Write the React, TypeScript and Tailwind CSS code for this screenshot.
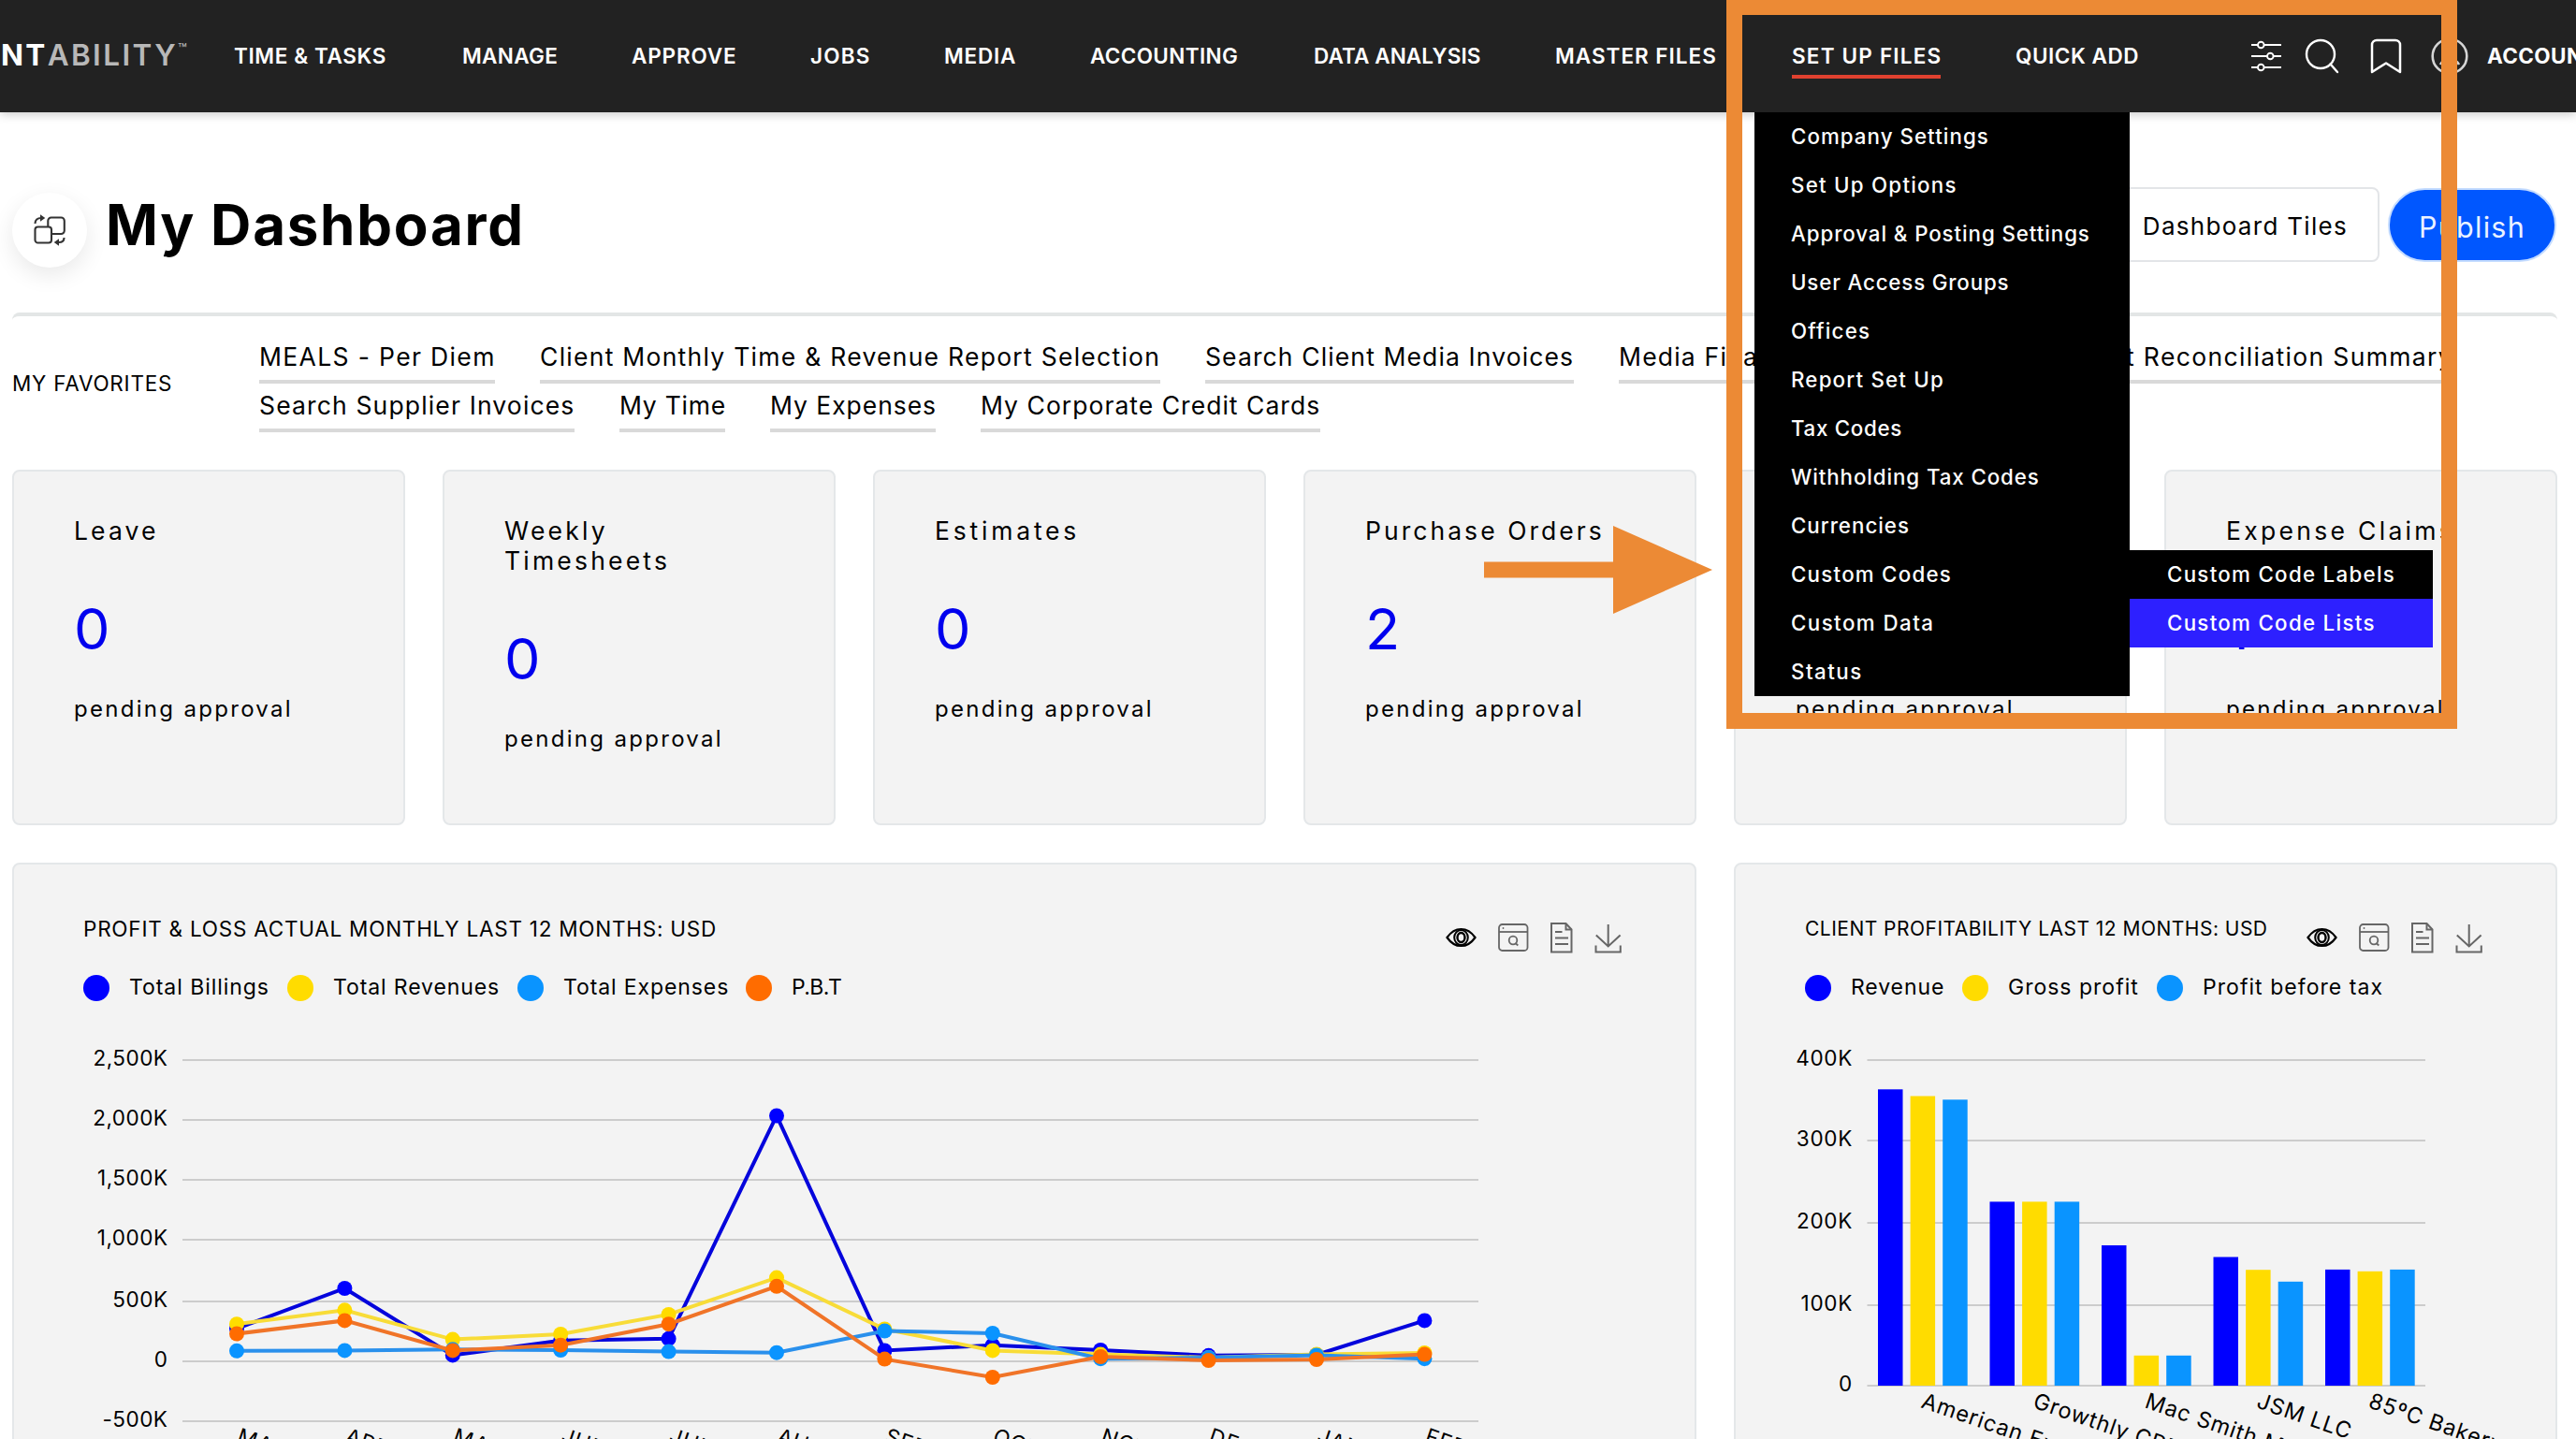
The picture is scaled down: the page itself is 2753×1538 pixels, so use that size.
import type { ReactNode } from "react";

const NAV = [
  { label: "TIME & TASKS", cls: "w-[164px] tracking-[0.62px]" },
  { label: "MANAGE", cls: "w-[101px] tracking-[0.35px]" },
  { label: "APPROVE", cls: "w-[111px] tracking-[0.85px]" },
  { label: "JOBS", cls: "w-[63px] tracking-[1.2px]" },
  { label: "MEDIA", cls: "w-[76px] tracking-[0.8px]" },
  { label: "ACCOUNTING", cls: "w-[159px] tracking-[0.36px]" },
  { label: "DATA ANALYSIS", cls: "w-[178px] tracking-[0.1px]" },
  { label: "MASTER FILES", cls: "w-[173px] tracking-[1px]" },
];

const MENU = [
  { label: "Company Settings", cls: "tracking-[1.05px]" },
  { label: "Set Up Options", cls: "tracking-[1.25px]" },
  { label: "Approval & Posting Settings", cls: "tracking-[0.92px]" },
  { label: "User Access Groups", cls: "tracking-[0.85px]" },
  { label: "Offices", cls: "tracking-[1.2px]" },
  { label: "Report Set Up", cls: "tracking-[1.2px]" },
  { label: "Tax Codes", cls: "tracking-[0.7px]" },
  { label: "Withholding Tax Codes", cls: "tracking-[0.9px]" },
  { label: "Currencies", cls: "tracking-[1px]" },
  { label: "Custom Codes", cls: "tracking-[1.25px]" },
  { label: "Custom Data", cls: "tracking-[1.45px]" },
  { label: "Status", cls: "tracking-[1.5px]" },
];

const FAVORITES = [
  [
    { label: "MEALS - Per Diem", cls: "w-[252px] tracking-[1.35px]" },
    { label: "Client Monthly Time & Revenue Report Selection", cls: "w-[663px] tracking-[1.27px]" },
    { label: "Search Client Media Invoices", cls: "w-[394px] tracking-[1.12px]" },
    { label: "Media Financials", cls: "w-[252px] tracking-[1.2px]" },
    { label: "Supplier Account Reconciliation Summary", cls: "w-[592px] text-right tracking-[1.35px]" },
  ],
  [
    { label: "Search Supplier Invoices", cls: "w-[337px] tracking-[1.15px]" },
    { label: "My Time", cls: "w-[113px] tracking-[0.75px]" },
    { label: "My Expenses", cls: "w-[177px] tracking-[0.95px]" },
    { label: "My Corporate Credit Cards", cls: "w-[363px] tracking-[1.03px]" },
  ],
];

const CARDS = [
  { title: "Leave", value: "0", cls: "tracking-[3.1px]" },
  { title: "Weekly Timesheets", value: "0", cls: "tracking-[3.2px]" },
  { title: "Estimates", value: "0", cls: "tracking-[3.8px]" },
  { title: "Purchase Orders", value: "2", cls: "tracking-[3.05px]" },
  { title: "", value: "", cls: "" },
  { title: "Expense Claims", value: "1", cls: "tracking-[3.3px]" },
];

const BLUE = "#0000ff";
const YELLOW = "#ffdc00";
const SKY = "#0a94ff";
const ORANGE = "#ff6c00";

function SlidersIcon() {
  return (
    <svg className="h-[36px] w-[34px]" viewBox="0 0 34 36" fill="none" stroke="#fff" strokeWidth="1.9">
      <path d="M1 6h7M15 6h18M1 18h17M25 18h8M1 30h7M15 30h18" />
      <circle cx="11.3" cy="6" r="3.3" />
      <circle cx="21.3" cy="18" r="3.3" />
      <circle cx="11.3" cy="30" r="3.3" />
    </svg>
  );
}

function SearchIcon() {
  return (
    <svg className="h-[38px] w-[38px]" viewBox="0 0 38 38" fill="none" stroke="#fff" strokeWidth="2.4" strokeLinecap="round">
      <circle cx="17" cy="17" r="15" />
      <path d="M27.5 27.5L35 36" />
    </svg>
  );
}

function BookmarkIcon() {
  return (
    <svg className="h-[38px] w-[34px]" viewBox="0 0 34 38" fill="none" stroke="#fff" strokeWidth="2.5" strokeLinejoin="round">
      <path d="M2 36V7a5 5 0 0 1 5-5h20a5 5 0 0 1 5 5v29L17 26.5z" />
    </svg>
  );
}

function UserIcon() {
  return (
    <svg className="h-[40px] w-[40px]" viewBox="0 0 40 40" fill="none" stroke="#d5d5d5" strokeWidth="2.6">
      <circle cx="20" cy="20" r="18.3" />
      <circle cx="20" cy="15" r="5.5" />
      <path d="M10 29c2-4 5.500-5.500 10-5.500s8 1.500 10 5.500" />
    </svg>
  );
}

function SwapTilesIcon() {
  return (
    <svg className="h-[36px] w-[36px]" viewBox="0 0 36 36" fill="none" stroke="#333" strokeWidth="2.1">
      <rect x="2.5" y="14.5" width="17.5" height="17" rx="3" />
      <path d="M16.3 14.5V8a3.500 3.500 0 0 1 3.500-3.500h10.500a3.500 3.500 0 0 1 3.500 3.500v10.500a3.500 3.500 0 0 1-3.500 3.500H20" />
      <path d="M2.5 11c0-4 2.500-6 6.500-6" />
      <path d="M33.5 26c0 3-2 5-5.500 5" />
      <path d="M8 1.300l5.300 3.700L8 8.700zM28 27.300L22.700 31l5.300 3.700z" fill="#333" stroke="none" />
    </svg>
  );
}

function PanelIcons() {
  return (
    <div className="-ml-px flex h-[34px] items-center">
      <svg className="h-[34px] w-[33px]" viewBox="0 0 33 34" fill="none" stroke="#000">
        <path d="M1.5 17C6 10.500 11 8 16.500 8s10.500 2.500 15 9c-4.500 6.500-9.500 9-15 9s-10.500-2.500-15-9z" strokeWidth="2.2" />
        <ellipse cx="16.5" cy="17" rx="7.3" ry="8" strokeWidth="2" />
        <ellipse cx="16.5" cy="17" rx="4" ry="5" strokeWidth="2.4" />
      </svg>
      <svg className="ml-[23px] h-[34px] w-[33px]" viewBox="0 0 33 34" fill="none" stroke="#666" strokeWidth="1.8">
        <rect x="1" y="3" width="30.5" height="28" rx="3.5" />
        <path d="M1 11h30.5" />
        <circle cx="5.500" cy="7" r="0.9" fill="#666" stroke="none" />
        <circle cx="16" cy="20" r="4.3" />
        <path d="M18.5 23l2.800 2.500" />
      </svg>
      <svg className="ml-[23px] h-[34px] w-[24px]" viewBox="0 0 24 34" fill="none" stroke="#666" strokeWidth="2">
        <path d="M1 2h15.500l6 6.500V32.500H1z" />
        <path d="M16.5 2v6.500h6M5 11h7.500M5 17.500h14M5 24h14" />
      </svg>
      <svg className="ml-[23px] h-[34px] w-[30px]" viewBox="0 0 30 34" fill="none" stroke="#666" strokeWidth="2">
        <path d="M14.7 3v23M1.800 14.500L14.700 26.500l12.900-12M1.500 25.500v7h26.300v-7" />
      </svg>
    </div>
  );
}

function LegendItem({ color, children, cls }: { color: string; children: ReactNode; cls: string }) {
  return (
    <div className="flex items-start">
      <svg className="h-[28px] w-[28px]" viewBox="0 0 28 28">
        <circle cx="14" cy="14" r="14" fill={color} />
      </svg>
      <span className={`-mt-px ml-[21px] whitespace-nowrap text-[23px] leading-[28px] ${cls}`}>{children}</span>
    </div>
  );
}

const SERIES = [
  { dot: BLUE, line: "#0505dc", ys: [1420, 1377, 1448.4, 1432.8, 1430.8, 1192.5, 1443.4, 1437.7, 1443, 1448.8, 1448, 1411.4] },
  { dot: YELLOW, line: "#f8dc38", ys: [1415.2, 1400.3, 1431.6, 1425.9, 1404.9, 1365.6, 1420.5, 1443.4, 1447.6, 1451, 1447.6, 1446] },
  { dot: SKY, line: "#2a90ec", ys: [1443.8, 1443.4, 1442.3, 1443, 1444.6, 1445.7, 1422.5, 1425, 1452.2, 1451, 1448.4, 1452.2] },
  { dot: ORANGE, line: "#f07428", ys: [1425.5, 1411.4, 1443.4, 1437.7, 1415.2, 1374.8, 1452.6, 1472, 1450, 1454, 1453, 1447.6] },
];
const MONTHS = ["MAR", "APR", "MAY", "JUN", "JUL", "AUG", "SEP", "OCT", "NOV", "DEC", "JAN", "FEB"];

function LineChart() {
  const grid = [
    { y: 1133, t: "2,500K" },
    { y: 1197, t: "2,000K" },
    { y: 1261, t: "1,500K" },
    { y: 1325, t: "1,000K" },
    { y: 1391, t: "500K" },
    { y: 1455, t: "0" },
    { y: 1519, t: "-500K" },
  ];
  const px = (i: number) => 253 + i * 115.4;
  return (
    <svg className="h-[438px] w-[1560px]" viewBox="75 1100 1560 438" fontFamily="Inter, sans-serif">
      {grid.map((g) => (
        <g key={g.t}>
          <path d={`M195 ${g.y}H1580`} stroke="#ccc" strokeWidth="2" />
          <text x="179.5" y={g.y + 6} textAnchor="end" fontSize="22.5" letterSpacing="0.5">{g.t}</text>
        </g>
      ))}
      {SERIES.map((s) => (
        <g key={s.dot}>
          <polyline points={s.ys.map((y, i) => `${px(i)},${y}`).join(" ")} fill="none" stroke={s.line} strokeWidth="4" />
          {s.ys.map((y, i) => (
            <circle key={i} cx={px(i)} cy={y} r="8" fill={s.dot} />
          ))}
        </g>
      ))}
      {MONTHS.map((m, i) => (
        <text key={m} transform={`translate(${px(i) - 1} 1541.5) rotate(19)`} fontSize="23" letterSpacing="1">{m}</text>
      ))}
    </svg>
  );
}

function BarChart() {
  const grid = [
    { y: 1133, t: "400K" },
    { y: 1219, t: "300K" },
    { y: 1307, t: "200K" },
    { y: 1395, t: "100K" },
    { y: 1481, t: "0" },
  ];
  const bars = [
    { name: "American Express", tops: [1164.3, 1171.5, 1175.3] },
    { name: "Growthly CRM", tops: [1284.4, 1284.4, 1284.4] },
    { name: "Mac Smith Media", tops: [1331, 1448.8, 1448.8] },
    { name: "JSM LLC", tops: [1343.5, 1357.2, 1369.8] },
    { name: "85ºC Bakery", tops: [1356.9, 1358.8, 1356.9] },
  ];
  const fills = [BLUE, YELLOW, SKY];
  return (
    <svg className="h-[438px] w-[760px]" viewBox="1910 1100 760 438" fontFamily="Inter, sans-serif">
      {grid.map((g) => (
        <g key={g.t}>
          <path d={`M1995.5 ${g.y}H2592`} stroke="#ccc" strokeWidth="2" />
          <text x="1980" y={g.y + 6} textAnchor="end" fontSize="22.5" letterSpacing="0.7">{g.t}</text>
        </g>
      ))}
      {bars.map((b, i) => (
        <g key={b.name}>
          {b.tops.map((y, j) => (
            <rect key={j} x={2007 + i * 119.5 + j * 34.6} y={y} width="26.5" height={1481 - y} fill={fills[j]} />
          ))}
          <text transform={`translate(${2052 + i * 119.5} 1504) rotate(19)`} fontSize="23.5" letterSpacing="0.9">{b.name}</text>
        </g>
      ))}
    </svg>
  );
}

export default function App() {
  return (
    <div className="relative flex h-[1538px] w-[2753px] flex-col overflow-hidden bg-white font-['Inter',sans-serif] text-black">
      <header className="flex h-[120px] shrink-0 items-center overflow-hidden bg-[#222] text-white shadow-[0_2px_10px_rgba(0,0,0,0.22)]">
        <div className="flex h-[36px] w-[250px] shrink-0 items-start pl-px text-[31.5px] leading-[34px]">
          <span className="font-bold tracking-[2.3px]">NT</span>
          <span className="font-semibold tracking-[2.4px] text-[#b8b8b8]">ABILITY</span>
          <span className="text-[16px] leading-[20px] text-[#b8b8b8]">™</span>
        </div>
        <nav className="flex shrink-0 gap-[80px] text-[22.5px] font-semibold leading-[28px]">
          {NAV.map((n) => (
            <span key={n.label} className={`whitespace-nowrap ${n.cls}`}>{n.label}</span>
          ))}
          <div className="relative w-[159px]">
            <span className="whitespace-nowrap tracking-[1.2px]">SET UP FILES</span>
            <div className="absolute left-0 top-[34px] h-[4px] w-[159px] bg-[#e0412f]" />
          </div>
          <span className="w-[133px] whitespace-nowrap tracking-[0.55px]">QUICK ADD</span>
        </nav>
        <div className="ml-[118px] flex shrink-0 items-center">
          <SlidersIcon />
          <div className="ml-[24px] flex"><SearchIcon /></div>
          <div className="ml-[32px] flex"><BookmarkIcon /></div>
          <div className="ml-[31px] flex"><UserIcon /></div>
          <span className="ml-[20px] whitespace-nowrap text-[22.5px] font-bold leading-[28px] tracking-[0.4px]">ACCOUNTS</span>
        </div>
      </header>

      <div className="flex h-[214px] shrink-0 items-start pl-[13px]">
        <div className="mt-[86px] flex h-[80px] w-[80px] items-center justify-center rounded-full bg-white shadow-[0_8px_24px_rgba(0,0,0,0.09)]">
          <SwapTilesIcon />
        </div>
        <h1 className="ml-[20px] mt-[84px] w-[460px] whitespace-nowrap text-[60px] font-bold leading-[72px] tracking-[1.75px]">My Dashboard</h1>
        <div className="ml-auto mr-[21px] flex items-start pt-[80px]">
          <div className="flex h-[80px] items-center rounded-[8px] border-2 border-[#e3e5e8] pl-[40px] pr-[32px] pt-[3px] text-[26px] leading-[32px] tracking-[1.3px]">Dashboard Tiles</div>
          <div className="ml-[9px] mt-px flex h-[79px] w-[180px] items-center justify-center rounded-full border-2 border-[#c4dcff] bg-[#0057ff] pt-[4px] text-[30.5px] leading-[36px] tracking-[1.3px] text-[#eaf2ff]">Publish</div>
        </div>
      </div>

      <section className="ml-[13px] flex h-[168px] w-[2720px] shrink-0 rounded-[8px] border-t-4 border-[#e3e6e6]">
        <div className="w-[264px] pt-[58px] text-[22.5px] leading-[28px] tracking-[0.75px]">MY FAVORITES</div>
        <div className="flex flex-col gap-[8px] pt-[27px] text-[26.5px] leading-[32px]">
          {FAVORITES.map((row, i) => (
            <div key={i} className="flex gap-[48px]">
              {row.map((f) => (
                <span key={f.label} className={`mb-[-1px] h-[45px] shrink-0 whitespace-nowrap border-b-4 border-[#d9d9d9] ${f.cls}`}>{f.label}</span>
              ))}
            </div>
          ))}
        </div>
      </section>

      <section className="ml-[13px] flex h-[380px] shrink-0 gap-[40px]">
        {CARDS.map((c, i) => (
          <div key={i} className="h-[380px] w-[420px] rounded-[8px] border-2 border-[#e4e7e9] bg-[#f3f3f3] pl-[64px] pt-[47px]">
            <h2 className={`min-h-[32px] w-[290px] text-[26.5px] leading-[32px] ${c.cls}`}>
              {c.title === "Weekly Timesheets" ? <>Weekly<br />Timesheets</> : c.title}
            </h2>
            <div className="mt-[53px] h-[72px] text-[61px] leading-[72px] text-[#0000ee]">{c.value}</div>
            <div className="mt-[34px] whitespace-nowrap text-[24px] leading-[32px] tracking-[2.3px]">pending approval</div>
          </div>
        ))}
      </section>

      <section className="ml-[13px] mt-[40px] flex shrink-0 gap-[40px]">
        <div className="h-[640px] w-[1800px] rounded-[8px] border-2 border-[#e4e7e9] bg-[#f3f3f3] pl-[60px]">
          <div className="flex h-[104px] items-start pl-[14px] pt-[55px]">
            <h3 className="w-[1457px] whitespace-nowrap text-[22.5px] leading-[28px] tracking-[0.76px]">PROFIT & LOSS ACTUAL MONTHLY LAST 12 MONTHS: USD</h3>
            <div className="pt-[6px]"><PanelIcons /></div>
          </div>
          <div className="mt-[14px] flex gap-[19px] pl-[14px]">
            <LegendItem color={BLUE} cls="w-[150px] tracking-[0.95px]">Total Billings</LegendItem>
            <LegendItem color={YELLOW} cls="w-[178px] tracking-[0.9px]">Total Revenues</LegendItem>
            <LegendItem color={SKY} cls="w-[176px] tracking-[0.9px]">Total Expenses</LegendItem>
            <LegendItem color={ORANGE} cls="tracking-[-0.6px]">P.B.T</LegendItem>
          </div>
          <div className="mt-[30px]"><LineChart /></div>
        </div>
        <div className="h-[640px] w-[880px] rounded-[8px] border-2 border-[#e4e7e9] bg-[#f3f3f3] pl-[55px]">
          <div className="flex h-[104px] items-start pl-[19px] pt-[55px]">
            <h3 className="w-[537px] whitespace-nowrap text-[21px] leading-[28px] tracking-[0.48px]">CLIENT PROFITABILITY LAST 12 MONTHS: USD</h3>
            <div className="pt-[6px]"><PanelIcons /></div>
          </div>
          <div className="mt-[14px] flex gap-[19px] pl-[19px]">
            <LegendItem color={BLUE} cls="w-[100px] tracking-[0.9px]">Revenue</LegendItem>
            <LegendItem color={YELLOW} cls="w-[140px] tracking-[1px]">Gross profit</LegendItem>
            <LegendItem color={SKY} cls="tracking-[1.05px]">Profit before tax</LegendItem>
          </div>
          <div className="mt-[30px]"><BarChart /></div>
        </div>
      </section>

      <div className="absolute left-[1875px] top-[120px] w-[401px] bg-black text-[22.3px] font-medium text-white">
        {MENU.map((m) => (
          <div key={m.label} className={`h-[52px] whitespace-nowrap pl-[39px] leading-[52px] ${m.cls}`}>{m.label}</div>
        ))}
        <div className="absolute left-[401px] top-[468px] w-[324px] bg-black">
          <div className="h-[52px] whitespace-nowrap pl-[40px] leading-[52px] tracking-[1.3px]">Custom Code Labels</div>
          <div className="h-[52px] whitespace-nowrap bg-[#2d20ff] pl-[40px] leading-[52px] tracking-[1.3px]">Custom Code Lists</div>
        </div>
      </div>

      <div className="absolute left-[1845px] top-0 h-[779px] w-[781px] border-[17px] border-t-[16px] border-[#ec8a35]" />
      <svg className="absolute left-[1586px] top-[562px] h-[94px] w-[244px]" viewBox="0 0 244 94">
        <path d="M0 38.5H138V0L244 47L138 94V55.5H0z" fill="#ec8a35" />
      </svg>
    </div>
  );
}
